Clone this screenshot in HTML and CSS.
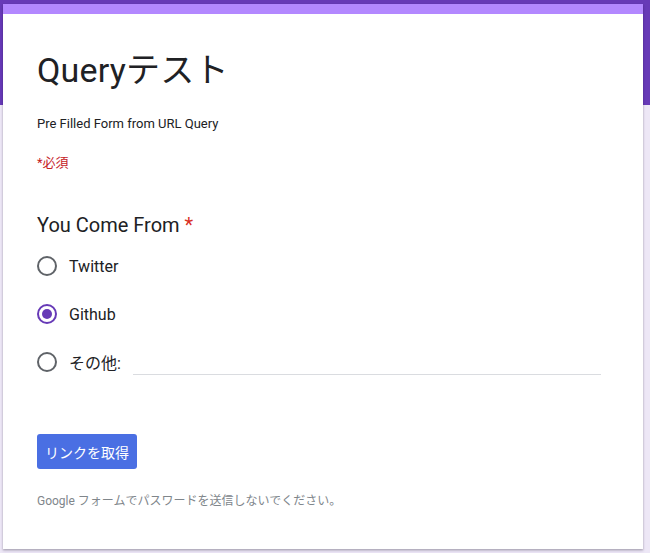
FILE: index.html
```html
<!DOCTYPE html>
<html lang="ja">
<head>
<meta charset="utf-8">
<link rel="stylesheet" href="styles.css">
</head>
<body>
<div class="card">
  <div class="card-top"></div>
  <div class="card-body">
    <h1 class="title">Queryテスト</h1>
    <p class="desc">Pre Filled Form from URL Query</p>
    <p class="req"><span>*</span>必須</p>
    <div class="question">
      <div class="q-title">You Come From <span class="star">*</span></div>
      <div class="options">
        <div class="opt"><span class="radio"></span><span class="label">Twitter</span></div>
        <div class="opt"><span class="radio on"></span><span class="label">Github</span></div>
        <div class="opt"><span class="radio"></span><span class="label">その他:</span><span class="other"></span></div>
      </div>
    </div>
    <button class="btn">リンクを取得</button>
    <p class="foot">Google フォームでパスワードを送信しないでください。</p>
  </div>
</div>
</body>
</html>
```
FILE: styles.css
```css
html, body { margin: 0; padding: 0; }
body {
  width: 650px;
  height: 553px;
  overflow: hidden;
  background: linear-gradient(#673ab7 0, #673ab7 105px, #ede7f6 105px);
  font-family: Roboto, "Noto Sans CJK JP", sans-serif;
  color: #202124;
}
.card {
  margin: 4px 0 0 3px;
  width: 640px;
  height: 545px;
  background: #fff;
  box-shadow: 0 1px 2px rgba(0,0,0,0.25), 0 2px 3px rgba(60,40,100,0.12);
}
.card-top { height: 10px; background: #b388ff; }
.card-body { padding: 0 0 0 34px; }
.title {
  margin: 0;
  padding-top: 36px;
  font-weight: 400;
  font-size: 34px;
  letter-spacing: 0.2px;
  line-height: 40px;
  height: 40px;
}
.desc {
  margin: 0;
  padding-top: 25px;
  font-size: 13px;
  line-height: 18px;
}
.req {
  margin: 0;
  padding-top: 21px;
  font-size: 13px;
  line-height: 18px;
  color: #c5221f;
}
.question { padding-top: 41px; }
.q-title {
  font-size: 20px;
  line-height: 24px;
  height: 24px;
}
.star { color: #d93025; }
.options { padding-top: 5px; }
.opt {
  display: flex;
  align-items: center;
  height: 48px;
}
.radio {
  box-sizing: border-box;
  width: 20px;
  height: 20px;
  border: 2px solid #5f6368;
  border-radius: 50%;
  display: flex;
  align-items: center;
  justify-content: center;
  flex: none;
}
.radio.on { border-color: #673ab7; }
.radio.on::after {
  content: "";
  width: 10px;
  height: 10px;
  border-radius: 50%;
  background: #673ab7;
}
.label {
  margin-left: 12px;
  font-size: 16px;
}
.other {
  margin-left: 12px;
  width: 468px;
  height: 20px;
  border-bottom: 1px solid #dadce0;
  align-self: flex-start;
  margin-top: 16px;
}
.btn {
  display: block;
  margin-top: 48px;
  width: 100px;
  height: 35px;
  border: 0;
  border-radius: 3px;
  background: #4a6fe3;
  color: #fff;
  font-family: Roboto, "Noto Sans CJK JP", sans-serif;
  font-size: 14px;
  padding: 0;
}
.foot {
  margin: 0;
  padding-top: 24px;
  font-size: 12px;
  line-height: 16px;
  color: #80868b;
}
```
